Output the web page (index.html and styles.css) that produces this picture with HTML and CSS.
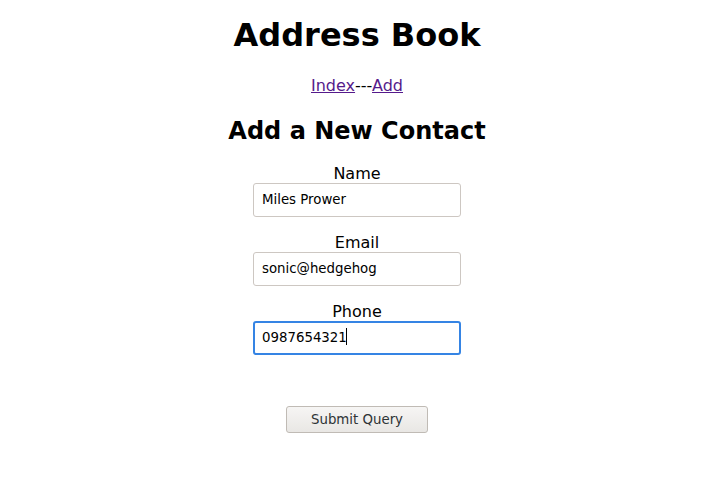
FILE: index.html
```html
<!DOCTYPE html>
<html>
<head>
<meta charset="utf-8">
<title>Address Book</title>
<link rel="stylesheet" href="styles.css">
</head>
<body>
<div class="page">
  <h1 class="title">Address Book</h1>
  <nav class="nav"><a href="#" class="nav-link">Index</a>---<a href="#" class="nav-link">Add</a></nav>
  <h2 class="subtitle">Add a New Contact</h2>
  <form class="form">
    <div class="field">
      <label class="label">Name</label>
      <input class="input" type="text" value="Miles Prower">
    </div>
    <div class="field">
      <label class="label">Email</label>
      <input class="input" type="text" value="sonic@hedgehog">
    </div>
    <div class="field">
      <label class="label">Phone</label>
      <div class="input-wrap">
        <input class="input input-focused" type="text" value="0987654321">
        <span class="caret"></span>
      </div>
    </div>
    <button class="submit" type="button">Submit Query</button>
  </form>
</div>
</body>
</html>
```
FILE: styles.css
```css
html, body {
  margin: 0;
  padding: 0;
  background: #ffffff;
}
body {
  font-family: "DejaVu Sans", sans-serif;
  color: #000000;
}
.page {
  display: flex;
  flex-direction: column;
  align-items: center;
  padding-left: 11px;
  padding-top: 17px;
}
.title {
  margin: 0;
  font-size: 32px;
  line-height: 37px;
  font-weight: bold;
}
.nav {
  margin-top: 22px;
  font-size: 16px;
  line-height: 19px;
}
.nav-link {
  color: #551a8b;
}
.subtitle {
  margin: 22px 0 0;
  font-size: 24px;
  line-height: 28px;
  font-weight: bold;
}
.form {
  margin-top: 19px;
  display: flex;
  flex-direction: column;
  align-items: center;
}
.field {
  display: flex;
  flex-direction: column;
  align-items: center;
  margin-bottom: 16px;
}
.label {
  font-size: 16px;
  line-height: 19px;
}
.input-wrap {
  position: relative;
}
.input {
  box-sizing: border-box;
  width: 208px;
  height: 34px;
  margin: 0;
  padding: 0 8px 2px;
  border: 1px solid #cdc7c2;
  border-radius: 3px;
  font-family: "DejaVu Sans", sans-serif;
  font-size: 13.333px;
  color: #000000;
  background: #ffffff;
  outline: none;
}
.input-focused {
  border: 2px solid #3584e4;
  padding: 0 7px 2px;
}
.caret {
  position: absolute;
  left: 93px;
  top: 7px;
  width: 1px;
  height: 17px;
  background: #000000;
}
.submit {
  margin-top: 35px;
  box-sizing: border-box;
  width: 142px;
  height: 27px;
  padding: 0;
  border: 1px solid #c0bbb5;
  border-radius: 3px;
  background: linear-gradient(#f6f5f4, #e9e7e4);
  font-family: "DejaVu Sans", sans-serif;
  font-size: 13.333px;
  color: #2e3436;
}
```
